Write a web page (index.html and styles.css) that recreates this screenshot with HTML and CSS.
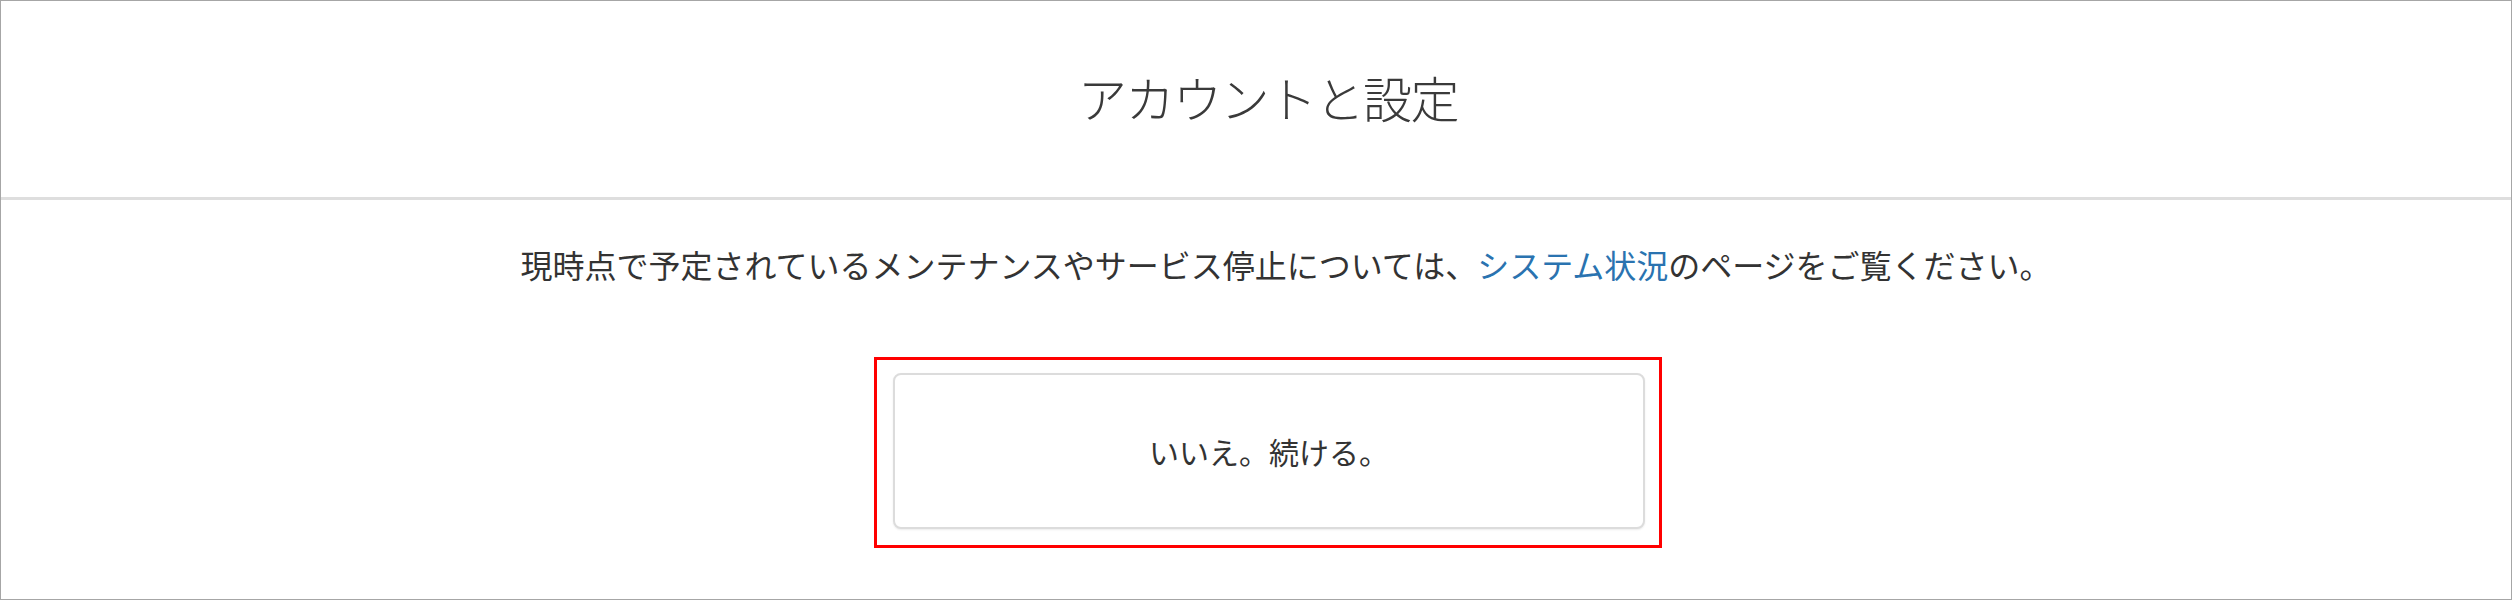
FILE: index.html
```html
<!DOCTYPE html>
<html lang="ja">
<head>
<meta charset="utf-8">
<title>アカウントと設定</title>
<link rel="stylesheet" href="styles.css">
</head>
<body>
<div class="page">
  <header class="header">
    <h1 class="title">アカウントと設定</h1>
  </header>
  <main class="content">
    <p class="notice">現時点で予定されているメンテナンスやサービス停止については、<a class="link" href="#">システム状況</a>のページをご覧ください。</p>
    <div class="highlight">
      <button class="continue" type="button">いいえ。続ける。</button>
    </div>
  </main>
</div>
</body>
</html>
```

FILE: styles.css
```css
html, body {
  margin: 0;
  padding: 0;
  background: #ffffff;
}

body {
  font-family: "Noto Sans CJK JP", "Noto Sans", "Liberation Sans", sans-serif;
  color: #333333;
}

.page {
  box-sizing: border-box;
  width: 2512px;
  height: 600px;
  border: 1px solid #a6a6a6;
  background: #ffffff;
  overflow: hidden;
}

.header {
  box-sizing: border-box;
  height: 199px;
  display: flex;
  align-items: center;
  justify-content: center;
  padding-left: 24px;
  padding-bottom: 4px;
  border-bottom: 3px solid #dedede;
}

.title {
  margin: 0;
  font-size: 49px;
  font-weight: 300;
  letter-spacing: -1.5px;
  line-height: 60px;
  color: #3a3a3a;
}

.content {
  padding-left: 24px;
  display: flex;
  flex-direction: column;
  align-items: center;
}

.notice {
  margin: 44px 0 0 0;
  padding-left: 36px;
  font-size: 32px;
  line-height: 40px;
  color: #333333;
  text-align: center;
  white-space: nowrap;
}

.link {
  color: #2a73b0;
  text-decoration: none;
}

.highlight {
  box-sizing: border-box;
  width: 788px;
  margin-top: 73px;
  padding: 13px 14px 16px 16px;
  border: 3px solid #ff0000;
}

.continue {
  box-sizing: border-box;
  display: flex;
  align-items: center;
  justify-content: center;
  width: 100%;
  height: 156px;
  margin: 0;
  padding: 0;
  border: 2px solid #dcdcdc;
  border-radius: 8px;
  background: #ffffff;
  box-shadow: 0 1px 2px rgba(0, 0, 0, 0.08);
  font-family: "Noto Sans CJK JP", "Noto Sans", "Liberation Sans", sans-serif;
  font-size: 30px;
  color: #333333;
  cursor: pointer;
}
```
